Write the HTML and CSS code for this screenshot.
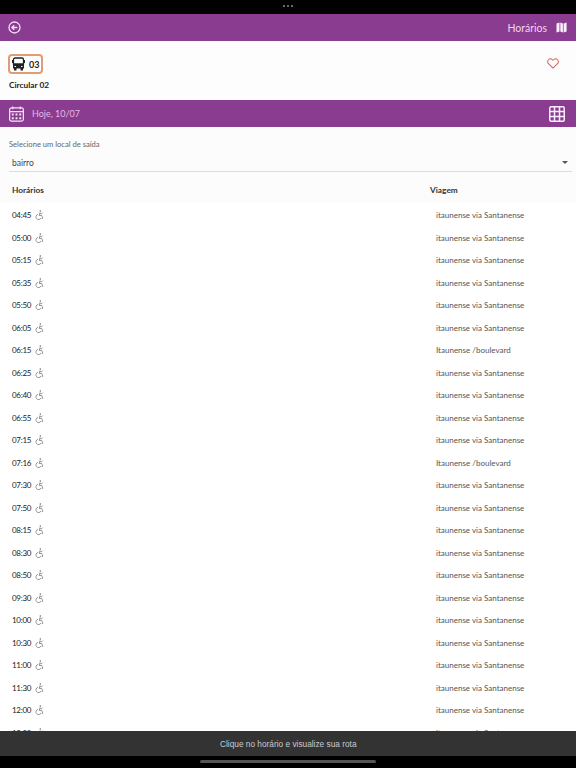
FILE: index.html
```html
<!DOCTYPE html>
<html lang="en">
<head>
    <meta charset="UTF-8">
    <meta name="viewport" content="width=device-width, initial-scale=1.0">
    <title>Horários</title>
    <link rel="stylesheet" href="styles.css">
</head>
<body>
    <svg class="defs" width="0" height="0">
        <symbol id="wheelchair" viewBox="0 0 12 12">
            <circle cx="7.600" cy="1.200" r="0.900" fill="#666"/>
            <path d="M7.300 2.800L6.300 6.600h3l1.300 3.400-1.200 0.300M6.800 4.600l2.600-0.300 1.200-1.200M4.800 5.200a3.200 3.200 0 1 0 3.700 4.300" fill="none" stroke="#666" stroke-width="0.800"/>
        </symbol>
    </svg>

    <div class="statusbar"><span class="dot"></span><span class="dot"></span><span class="dot"></span></div>

    <header class="topbar">
        <svg class="back-icon" width="13" height="13" viewBox="0 0 13 13">
            <circle cx="6.500" cy="6.500" r="5.500" fill="none" stroke="#f3def5" stroke-width="1.300"/>
            <path d="M3.600 6.500h5.800M6.200 4.200l-2.400 2.300 2.400 2.300" fill="none" stroke="#f3def5" stroke-width="1.300"/>
        </svg>
        <span class="topbar-title">Horários</span>
        <svg class="map-icon" width="11" height="11" viewBox="0 0 11 11">
            <path d="M0.500 1.500l3-1v9l-3 1zM4.300 0.500l2.600 1v9l-2.600-1zM7.600 1.500l3-1v9l-3 1z" fill="#fbeefc"/>
        </svg>
    </header>

    <section class="line-info">
        <div>
            <div class="line-badge">
                <svg width="13" height="14" viewBox="0 0 13 14">
                    <path d="M3 1h7a1.500 1.500 0 0 1 1.500 1.500V7h-10V2.500A1.500 1.500 0 0 1 3 1z" fill="none" stroke="#222" stroke-width="1.300"/>
                    <path d="M0.500 3v3M12.500 3v3" stroke="#222" stroke-width="1"/>
                    <path d="M1 7h11v4.500H1zM2 11.500h2.500V13.500H2zM8.500 11.500H11V13.500H8.500z" fill="#222"/>
                    <path d="M2.500 9h1.500v1H2.500zM9 9h1.500v1H9z" fill="#fff"/>
                </svg>
                <span>03</span>
            </div>
            <div class="line-name">Circular 02</div>
        </div>
        <svg class="heart" width="12" height="11" viewBox="0 0 13 12">
            <path d="M6.500 11L1.600 6.100a3 3 0 0 1 0-4.200 3 3 0 0 1 4.200 0l0.700 0.700 0.700-0.700a3 3 0 0 1 4.200 0 3 3 0 0 1 0 4.200z" fill="none" stroke="#d9635f" stroke-width="1.100"/>
        </svg>
    </section>

    <section class="datebar">
        <svg width="15" height="16" viewBox="0 0 16 17">
            <rect x="0.700" y="2" width="14.600" height="14" rx="2" fill="none" stroke="#f6e6f8" stroke-width="1.300"/>
            <path d="M0.700 6h14.600" stroke="#f6e6f8" stroke-width="1.300"/>
            <path d="M4 0.500v3M12 0.500v3" stroke="#f6e6f8" stroke-width="1.300"/>
            <path d="M3 8h2v2H3zM7 8h2v2H7zM11 8h2v2h-2zM3 12h2v2H3zM7 12h2v2H7zM11 12h2v2h-2z" fill="#f6e6f8"/>
        </svg>
        <span class="date-text">Hoje, 10/07</span>
        <svg class="grid-icon" width="16" height="16" viewBox="0 0 16 16">
            <rect x="0.750" y="0.750" width="14.500" height="14.500" rx="1.500" fill="none" stroke="#fbeefc" stroke-width="1.500"/>
            <path d="M5.500 1v14M10.500 1v14M1 5.500h14M1 10.500h14" stroke="#fbeefc" stroke-width="1.500"/>
        </svg>
    </section>

    <section class="origin">
        <label class="origin-label">Selecione um local de saída</label>
        <div class="origin-select">
            <span>bairro</span>
            <span class="caret"></span>
        </div>
    </section>

    <div class="table-head">
        <span>Horários</span>
        <span class="trip-head">Viagem</span>
    </div>

    <main class="rows">
        <div class="row"><span class="time">04:45</span><svg class="chair"><use href="#wheelchair"/></svg><span class="trip">itaunense via Santanense</span></div>
        <div class="row"><span class="time">05:00</span><svg class="chair"><use href="#wheelchair"/></svg><span class="trip">itaunense via Santanense</span></div>
        <div class="row"><span class="time">05:15</span><svg class="chair"><use href="#wheelchair"/></svg><span class="trip">itaunense via Santanense</span></div>
        <div class="row"><span class="time">05:35</span><svg class="chair"><use href="#wheelchair"/></svg><span class="trip">itaunense via Santanense</span></div>
        <div class="row"><span class="time">05:50</span><svg class="chair"><use href="#wheelchair"/></svg><span class="trip">itaunense via Santanense</span></div>
        <div class="row"><span class="time">06:05</span><svg class="chair"><use href="#wheelchair"/></svg><span class="trip">itaunense via Santanense</span></div>
        <div class="row"><span class="time">06:15</span><svg class="chair"><use href="#wheelchair"/></svg><span class="trip">Itaunense /boulevard</span></div>
        <div class="row"><span class="time">06:25</span><svg class="chair"><use href="#wheelchair"/></svg><span class="trip">itaunense via Santanense</span></div>
        <div class="row"><span class="time">06:40</span><svg class="chair"><use href="#wheelchair"/></svg><span class="trip">itaunense via Santanense</span></div>
        <div class="row"><span class="time">06:55</span><svg class="chair"><use href="#wheelchair"/></svg><span class="trip">itaunense via Santanense</span></div>
        <div class="row"><span class="time">07:15</span><svg class="chair"><use href="#wheelchair"/></svg><span class="trip">itaunense via Santanense</span></div>
        <div class="row"><span class="time">07:16</span><svg class="chair"><use href="#wheelchair"/></svg><span class="trip">Itaunense /boulevard</span></div>
        <div class="row"><span class="time">07:30</span><svg class="chair"><use href="#wheelchair"/></svg><span class="trip">itaunense via Santanense</span></div>
        <div class="row"><span class="time">07:50</span><svg class="chair"><use href="#wheelchair"/></svg><span class="trip">itaunense via Santanense</span></div>
        <div class="row"><span class="time">08:15</span><svg class="chair"><use href="#wheelchair"/></svg><span class="trip">itaunense via Santanense</span></div>
        <div class="row"><span class="time">08:30</span><svg class="chair"><use href="#wheelchair"/></svg><span class="trip">itaunense via Santanense</span></div>
        <div class="row"><span class="time">08:50</span><svg class="chair"><use href="#wheelchair"/></svg><span class="trip">itaunense via Santanense</span></div>
        <div class="row"><span class="time">09:30</span><svg class="chair"><use href="#wheelchair"/></svg><span class="trip">itaunense via Santanense</span></div>
        <div class="row"><span class="time">10:00</span><svg class="chair"><use href="#wheelchair"/></svg><span class="trip">itaunense via Santanense</span></div>
        <div class="row"><span class="time">10:30</span><svg class="chair"><use href="#wheelchair"/></svg><span class="trip">itaunense via Santanense</span></div>
        <div class="row"><span class="time">11:00</span><svg class="chair"><use href="#wheelchair"/></svg><span class="trip">itaunense via Santanense</span></div>
        <div class="row"><span class="time">11:30</span><svg class="chair"><use href="#wheelchair"/></svg><span class="trip">itaunense via Santanense</span></div>
        <div class="row"><span class="time">12:00</span><svg class="chair"><use href="#wheelchair"/></svg><span class="trip">itaunense via Santanense</span></div>
        <div class="row"><span class="time">12:30</span><svg class="chair"><use href="#wheelchair"/></svg><span class="trip">itaunense via Santanense</span></div>
    </main>

    <div class="toast">Clique no horário e visualize sua rota</div>
    <div class="homebar"><span class="home-indicator"></span></div>
</body>
</html>
```

FILE: styles.css
```css
html, body {
    height: 100%;
}
body {
    margin: 0;
    height: 768px;
    overflow: hidden;
    display: flex;
    flex-direction: column;
    font-family: Lato, "Noto Sans", Arial, sans-serif;
    background: #fff;
    color: #222;
}
.defs {
    position: absolute;
}
.statusbar {
    height: 14px;
    flex: none;
    background: #000;
    display: flex;
    justify-content: center;
    align-items: center;
    gap: 2px;
    padding-bottom: 2px;
    box-sizing: border-box;
}
.dot {
    width: 2px;
    height: 2px;
    border-radius: 50%;
    background: #8b8b8b;
}
.topbar {
    height: 27px;
    flex: none;
    background: #8a3c90;
    display: flex;
    align-items: center;
    padding: 0 9px 0 8px;
    color: #f0d4f2;
}
.topbar-title {
    margin-left: auto;
    margin-right: 9px;
    font-size: 10.500px;
}
.line-info {
    height: 58px;
    flex: none;
    box-sizing: border-box;
    background: #fdfdfd;
    display: flex;
    justify-content: space-between;
    padding: 13px 17px 0 8px;
}
.heart {
    margin-top: 4px;
}
.line-badge {
    width: 35px;
    height: 20px;
    box-sizing: border-box;
    border: 2px solid #e49a72;
    border-radius: 4px;
    background: #fff;
    display: flex;
    align-items: center;
    gap: 4px;
    padding-left: 2px;
    font-size: 9px;
    font-weight: 700;
    color: #222;
}
.line-name {
    margin-top: 6px;
    margin-left: 1px;
    font-size: 8.300px;
    font-weight: 700;
    color: #222;
}
.datebar {
    height: 27px;
    flex: none;
    margin-top: 1px;
    background: #8a3c90;
    display: flex;
    align-items: center;
    padding: 0 11px 0 9px;
}
.date-text {
    margin-left: 8px;
    font-size: 9px;
    color: #e3bde6;
}
.grid-icon {
    margin-left: auto;
}
.origin {
    flex: none;
    height: 45px;
    box-sizing: border-box;
    padding: 12px 4px 0 9px;
    background: #fcfcfc;
}
.origin-label {
    display: block;
    font-size: 7.600px;
    line-height: 11px;
    color: #666;
}
.origin-select {
    margin-top: 4px;
    height: 18px;
    box-sizing: border-box;
    padding: 0 4px 0 3px;
    border-bottom: 1px solid #ddd;
    display: flex;
    align-items: center;
    justify-content: space-between;
    font-size: 8.500px;
    color: #444;
}
.caret {
    width: 0;
    height: 0;
    border-left: 3px solid transparent;
    border-right: 3px solid transparent;
    border-top: 3px solid #555;
}
.table-head {
    flex: none;
    height: 30px;
    box-sizing: border-box;
    display: flex;
    align-items: center;
    padding: 6px 0 0 12px;
    font-size: 8.300px;
    font-weight: 700;
    color: #333;
    background: #fcfcfc;
}
.trip-head {
    margin-left: auto;
    width: 146px;
    box-sizing: border-box;
}
.rows {
    flex: 1;
    min-height: 0;
    overflow: hidden;
    padding-top: 2px;
}
.row {
    height: 22.500px;
    display: flex;
    align-items: center;
    padding-left: 12px;
}
.time {
    width: 22px;
    font-size: 8px;
    letter-spacing: -0.300px;
    color: #222;
}
.chair {
    width: 10px;
    height: 10px;
}
.trip {
    margin-left: auto;
    width: 140px;
    font-size: 8px;
    color: #555;
}
.toast {
    height: 25px;
    flex: none;
    background: #343334;
    color: #c9c9c9;
    font-family: "Liberation Sans", Arial, sans-serif;
    font-size: 8.300px;
    display: flex;
    align-items: center;
    padding-left: 220px;
}
.homebar {
    height: 12px;
    flex: none;
    background: #000;
    display: flex;
    justify-content: flex-start;
    padding: 4px 0 0 200px;
    box-sizing: border-box;
}
.home-indicator {
    width: 176px;
    height: 3px;
    border-radius: 2px;
    background: #555;
}
```
